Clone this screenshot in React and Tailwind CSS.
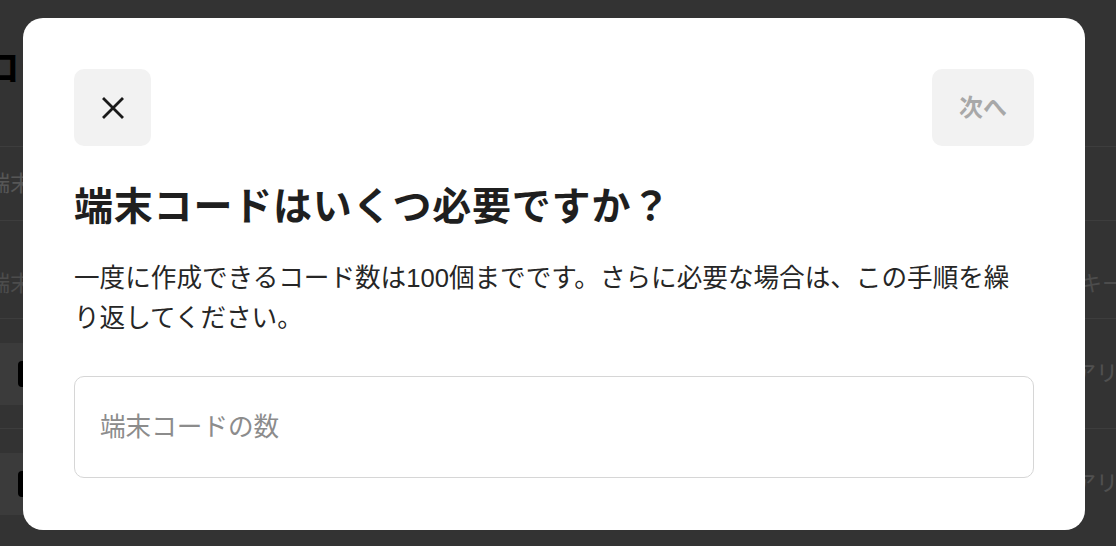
export default function App() {
  const font = { fontFamily: '"Liberation Sans", "Noto Sans CJK JP", sans-serif' }

  return (
    <div className="relative h-[546px] w-full overflow-hidden bg-[#808080]" style={font}>
      {/* Page behind the dialog */}
      <div className="-ml-[12px] -mr-[8px] pt-[44px]">
        <h1 className="-ml-[4px] h-[50px] text-[36px] font-bold leading-[50px] text-black">コード管理</h1>
        <div className="mt-[52px] flex h-[74px] items-center border-t border-[#9a9a9a] text-[22px] text-[#d6d6d6]">
          <span>端末コード</span>
        </div>
        <div className="flex h-[98px] items-end justify-between border-t border-[#9a9a9a] pb-[18px] text-[22px] text-[#bdbdbd]">
          <span>端末コード</span>
          <span>アクセスキー</span>
        </div>
        <div className="flex h-[110px] items-center justify-between border-t border-[#9a9a9a] pr-[6px]">
          <div className="flex h-[62px] w-[74px] items-center justify-end rounded-[10px] bg-[#959595] pr-[2px]">
            <div className="h-[26px] w-[42px] rounded-[4px] bg-black" />
          </div>
          <span className="text-[22px] text-[#c8c8c8]">アリ</span>
        </div>
        <div className="flex h-[110px] items-center justify-between border-t border-[#9a9a9a] pr-[6px]">
          <div className="flex h-[62px] w-[74px] items-center justify-end rounded-[10px] bg-[#959595] pr-[2px]">
            <div className="h-[26px] w-[42px] rounded-[4px] bg-black" />
          </div>
          <span className="text-[22px] text-[#c8c8c8]">アリ</span>
        </div>
      </div>

      {/* Overlay + dialog */}
      <div className="absolute inset-0 flex bg-black/60 pl-[23px] pt-[18px]">
        <div className="h-[512px] w-[1062px] rounded-[20px] bg-white px-[51px] pt-[51px]">
          <div className="flex items-center justify-between">
            <button className="flex h-[77px] w-[77px] items-center justify-center rounded-[10px] bg-[#f2f2f2]">
              <svg width="22" height="22" viewBox="0 0 22 22" fill="none" stroke="#1a1a1a" strokeWidth="2.8" strokeLinecap="square">
                <path d="M2 2 L20 20 M20 2 L2 20" />
              </svg>
            </button>
            <button className="h-[77px] rounded-[10px] bg-[#f2f2f2] px-[27px] text-[24px] font-bold text-[#a8a8a8]">
              次へ
            </button>
          </div>

          <h2 className="mt-[38px] text-[39px] font-bold leading-[46px] tracking-[0.8px] text-[#1f1f1f]">
            端末コードはいくつ必要ですか？
          </h2>

          <p className="mt-[28px] text-[25.6px] leading-[40px] text-[#262626]">
            一度に作成できるコード数は100個までです。さらに必要な場合は、この手順を繰り返してください。
          </p>

          <input
            type="text"
            placeholder="端末コードの数"
            className="mt-[38px] h-[102px] w-full rounded-[10px] border border-[#d6d6d6] px-[25px] text-[25.6px] text-[#1f1f1f] outline-none placeholder:text-[#8c8c8c]"
            style={font}
          />
        </div>
      </div>
    </div>
  )
}
